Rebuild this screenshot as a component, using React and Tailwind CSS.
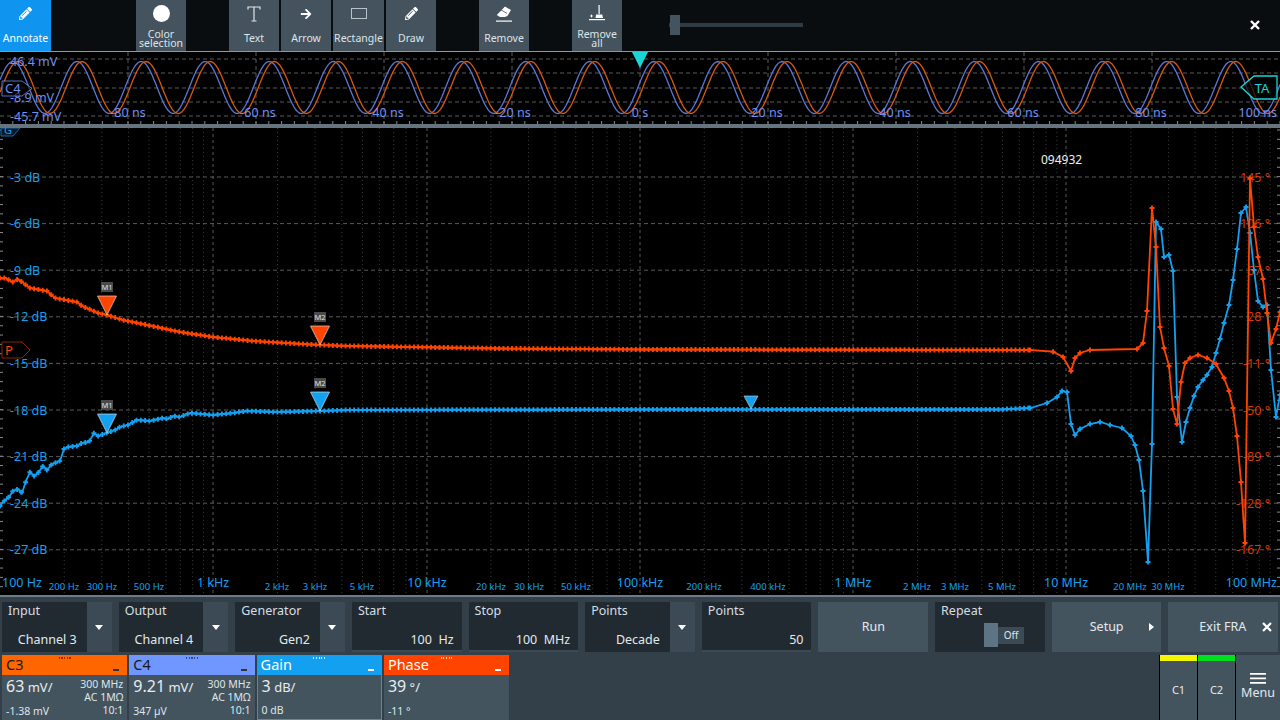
import React from 'react';
import { FaPencilAlt, FaEraser, FaArrowRight } from 'react-icons/fa';

const orangePts = [[0,278],[5,278],[13,282],[18,279],[30,288],[47,291],[55,298],[77,302],[82,306],[98,313],[107,315],[123,320],[147,325],[180,332],[213,337],[253,341],[320,345],[350,346],[500,348.5],[640,349.5],[1030,350],[1053,351.7],[1063,357],[1071,371],[1075,358],[1080,353],[1090,350],[1137,349],[1143,343],[1147,311],[1152,208],[1156,247],[1160,327],[1164,348],[1169,366],[1173,409],[1177,424],[1181,382],[1185,363],[1190,358],[1198,355],[1207,358],[1216,364],[1224,378],[1229,391],[1233,408],[1237,436],[1241,482],[1245,543],[1250,178],[1254,227],[1258,257],[1263,279],[1267,313],[1271,343],[1276,329],[1280,312]];
const bluePts = [[0,506],[5,500],[9,497],[13,491],[18,489],[22,493],[26,481],[30,472],[34,476],[38,473],[43,466],[47,470],[52,464],[60,461],[64,449],[68,447],[77,446],[82,443],[89,442],[94,433],[98,436],[107,433],[115,430],[120,427],[128,425],[137,420],[150,421],[163,418],[168,419],[173,416],[180,417],[190,413],[213,415],[233,413],[247,411],[277,412],[320,411],[350,410],[640,409.5],[1000,409.5],[1030,408],[1047,403],[1057,397],[1062,391],[1067,392],[1071,424],[1075,435],[1080,429],[1090,424],[1100,422],[1110,425],[1122,428],[1131,436],[1135,445],[1139,460],[1143,491],[1148,562],[1152,444],[1156,222],[1161,229],[1164,257],[1169,255],[1173,271],[1177,397],[1182,442],[1186,422],[1190,408],[1194,396],[1198,387],[1203,380],[1207,375],[1212,367],[1216,353],[1220,339],[1224,323],[1229,305],[1233,280],[1237,249],[1241,213],[1246,207],[1250,233],[1254,270],[1258,301],[1263,307],[1267,305],[1271,370],[1276,417],[1280,395]];

// one dot per sweep point, 50 points a decade
function sweepDots(pts) {
  const dots = [];
  for (let x = 0; x < 1030; x += 4.267) {
    let i = 0;
    while (pts[i + 1][0] < x) i++;
    const [x0, y0] = pts[i];
    const [x1, y1] = pts[i + 1];
    dots.push([x, y0 + ((y1 - y0) * (x - x0)) / (x1 - x0)]);
  }
  return dots.concat(pts.filter((p) => p[0] >= 1030));
}

function Trace({ pts, color }) {
  const line = pts.map((p) => p.join(',')).join(' ');
  const dots = sweepDots(pts)
    .map(([x, y]) => `M${(x - 2.5).toFixed(1)} ${y.toFixed(1)}h5M${x.toFixed(1)} ${(y - 2.5).toFixed(1)}v5`)
    .join('');
  return (
    <g>
      <polyline points={line} fill="none" stroke={color} strokeWidth="1.8" />
      <path d={dots} fill="none" stroke={color} strokeWidth="1.9" />
    </g>
  );
}

function Marker({ x, tip, color, label }) {
  return (
    <g>
      <polygon points={`${x - 9.5},${tip - 19} ${x + 9.5},${tip - 19} ${x},${tip}`} fill={color} stroke="#d8d8d8" strokeWidth="0.7" />
      {label && <rect x={x - 6} y={tip - 33} width="12" height="10" fill="#4a4a4a" />}
      {label && <text x={x} y={tip - 25} fontSize="7.5" fill="#e0e0e0" textAnchor="middle">{label}</text>}
    </g>
  );
}

const dbLabels = ['-3 dB', '-6 dB', '-9 dB', '-12 dB', '-15 dB', '-18 dB', '-21 dB', '-24 dB', '-27 dB'];
const degLabels = ['145 °', '106 °', '67 °', '28 °', '-11 °', '-50 °', '-89 °', '-128 °', '-167 °'];
const bigFreq = [['1 kHz', 213], ['10 kHz', 427], ['100 kHz', 640], ['1 MHz', 853], ['10 MHz', 1066]];
const smallFreq = [['200 Hz', 64], ['300 Hz', 102], ['500 Hz', 149], ['2 kHz', 277], ['3 kHz', 315], ['5 kHz', 362], ['20 kHz', 491], ['30 kHz', 529], ['50 kHz', 576], ['200 kHz', 704], ['400 kHz', 768], ['2 MHz', 917], ['3 MHz', 955], ['5 MHz', 1002], ['20 MHz', 1130], ['30 MHz', 1168]];

function MainPlot() {
  const minors = [];
  for (let d = 0; d < 6; d++) {
    for (let n = 2; n < 10; n++) minors.push(d * 213.33 + Math.log10(n) * 213.33);
  }
  const rows = dbLabels.map((_, i) => 177 + i * 46.6);
  const ticks = [];
  for (let y = 130; y < 595; y += 9.32) ticks.push(y);
  return (
    <svg className="block w-[1280px] h-[467px] bg-black" viewBox="0 128 1280 467">
      {minors.map((x) => <line key={x} x1={x} x2={x} y1="128" y2="595" stroke="#3a3a3a" strokeWidth="1" strokeDasharray="1 3" />)}
      {[213, 427, 640, 853, 1066].map((x) => <line key={x} x1={x} x2={x} y1="128" y2="595" stroke="#5a5a5a" strokeWidth="1" strokeDasharray="3 3" />)}
      {rows.map((y) => <line key={y} x1="0" x2="1280" y1={y} y2={y} stroke="#5a5a5a" strokeWidth="1" strokeDasharray="4 3" />)}
      {ticks.map((y) => <line key={y} x1="0" x2="3" y1={y} y2={y} stroke="#8a8a8a" strokeWidth="1" />)}
      {ticks.map((y) => <line key={y} x1="1277" x2="1280" y1={y} y2={y} stroke="#8a8a8a" strokeWidth="1" />)}
      <polygon points="1,128 20,128 13,136 1,136" fill="#0b1a26" stroke="#146aa8" strokeWidth="1" />
      <text x="4" y="134" fontSize="11" fill="#14a0f0">G</text>
      <g fontSize="12.5" fill="#14a0f0">
        {dbLabels.map((t, i) => <text key={t} x="10" y={rows[i] + 4.5}>{t}</text>)}
        <text x="2" y="587">100 Hz</text>
        <text x="1277" y="587" textAnchor="end">100 MHz</text>
        {bigFreq.map(([t, x]) => <text key={t} x={x} y="587" textAnchor="middle">{t}</text>)}
      </g>
      <g fontSize="9.5" fill="#14a0f0">
        {smallFreq.map(([t, x]) => <text key={t} x={x} y="590" textAnchor="middle">{t}</text>)}
      </g>
      <Trace pts={bluePts} color="#14a0f0" />
      <Trace pts={orangePts} color="#ff4400" />
      <g fontSize="12.5" fill="#ff4400" fillOpacity="0.85">
        {degLabels.map((t, i) => <text key={t} x="1270" y={rows[i] + 4.5} textAnchor="end">{t}</text>)}
      </g>
      <polygon points="2,342 22,342 30,350 22,358 2,358" fill="#000" stroke="#8a2400" strokeWidth="1" />
      <text x="5" y="355" fontSize="13" fill="#ff4400">P</text>
      <Marker x={107} tip={315} color="#ff4400" label="M1" />
      <Marker x={320} tip={345} color="#ff4400" label="M2" />
      <Marker x={107} tip={433} color="#14a0f0" label="M1" />
      <Marker x={320} tip={411} color="#14a0f0" label="M2" />
      <polygon points="744,396 758,396 751,409" fill="#14a0f0" stroke="#d8d8d8" strokeWidth="0.6" />
      <text x="1041" y="164" fontSize="12" fill="#f0f0f0">094932</text>
    </svg>
  );
}

function sine(offset) {
  const pts = [];
  for (let x = 0; x <= 1280; x += 2) {
    pts.push(`${x},${(87.5 - 26 * Math.cos((2 * Math.PI * (x - 77 - offset)) / 64.1)).toFixed(1)}`);
  }
  return pts.join(' ');
}

function Overview() {
  const ticks = [];
  for (let x = 0; x < 1280; x += 12.8) ticks.push(x);
  return (
    <svg className="block w-[1280px] h-[72px] bg-black" viewBox="0 52 1280 72">
      {[59, 73, 88, 102, 116].map((y) => <line key={y} x1="0" x2="1280" y1={y} y2={y} stroke="#5a5a5a" strokeWidth="1" strokeDasharray="4 3" />)}
      {[128, 256, 384, 512, 640, 768, 896, 1024, 1152].map((x) => <line key={x} x1={x} x2={x} y1="52" y2="124" stroke="#5a5a5a" strokeWidth="1" strokeDasharray="4 3" />)}
      {ticks.map((x) => <line key={x} x1={x} x2={x} y1="121" y2="124" stroke="#8a8a8a" strokeWidth="1" />)}
      <polyline points={sine(0)} fill="none" stroke="#5a78d8" strokeWidth="1.3" />
      <polyline points={sine(5)} fill="none" stroke="#d9590f" strokeWidth="1.3" />
      <g fontSize="12.5" fill="#7090f0">
        <text x="10" y="66">46.4 mV</text>
        <text x="10" y="102">-8.9 mV</text>
        <text x="10" y="121">-45.7 mV</text>
        {[['-80 ns', 128], ['-60 ns', 258], ['-40 ns', 386], ['-20 ns', 513], ['0 s', 640], ['20 ns', 767], ['40 ns', 895], ['60 ns', 1023], ['80 ns', 1151]].map(([t, x]) => (
          <text key={t} x={x} y="117" textAnchor="middle">{t}</text>
        ))}
        <text x="1277" y="117" textAnchor="end">100 ns</text>
      </g>
      <polygon points="632,52 648,52 640,68" fill="#1bd6d6" />
      <polygon points="2,81 22,81 32,88.5 22,96 2,96" fill="#000" fillOpacity="0.6" stroke="#7090f0" strokeWidth="0.8" />
      <text x="5" y="93" fontSize="13" fill="#7090f0">C4</text>
      <polygon points="1241,87 1254,76 1277,76 1277,99 1254,99" fill="#000" fillOpacity="0.7" stroke="#1bd6d6" strokeWidth="1.3" />
      <text x="1262" y="93" fontSize="13" fill="#1bd6d6" textAnchor="middle">TA</text>
    </svg>
  );
}

function ToolButton({ label, children, className = '' }) {
  return (
    <div className={`w-[50px] h-[51px] bg-[#44535e] flex flex-col items-center text-[10.5px] leading-[9.5px] text-[#dfe5e9] text-center ${className}`}>
      <div className="h-[27px] flex items-center justify-center shrink-0">{children}</div>
      <div className="h-[20px] mt-[2px] flex items-center justify-center">{label}</div>
    </div>
  );
}

function Toolbar() {
  return (
    <div className="h-[51px] flex items-start bg-[#0a0d0f] text-[#dfe5e9]">
      <div className="w-[51px] h-[51px] bg-[#0f95ef] flex flex-col items-center text-[10.5px] text-white">
        <div className="h-[27px] flex items-center"><FaPencilAlt size={13} /></div>
        <div className="h-[20px] mt-[2px] flex items-center">Annotate</div>
      </div>
      <ToolButton className="ml-[85px]" label={<span>Color<br />selection</span>}>
        <div className="w-[17px] h-[17px] rounded-full bg-white" />
      </ToolButton>
      <ToolButton className="ml-[43px]" label="Text">
        <svg width="14" height="16" viewBox="0 0 14 16" fill="none" stroke="#dfe5e9" strokeWidth="1.2">
          <path d="M1 3.5V1h12v2.5M7 1v14M4.5 15h5" />
        </svg>
      </ToolButton>
      <ToolButton className="ml-[2px]" label="Arrow"><FaArrowRight size={12} color="#fff" /></ToolButton>
      <ToolButton className="ml-[2px] w-[51px]" label="Rectangle">
        <div className="w-[16px] h-[11px] border border-[#b8c2c9]" />
      </ToolButton>
      <ToolButton className="ml-[2px]" label="Draw"><FaPencilAlt size={13} color="#fff" /></ToolButton>
      <ToolButton className="ml-[43px]" label="Remove">
        <svg width="18" height="18" viewBox="0 0 18 18" fill="#fff">
          <path d="M10 1.5l6 3.6-3.6 5.9-2.6 1H5L1.8 10z" />
          <path d="M1 15.5h16v1.2H1z" />
          <path d="M6 4.8l6 3.6" stroke="#44535e" strokeWidth="0.8" />
        </svg>
      </ToolButton>
      <ToolButton className="ml-[43px]" label={<span>Remove<br />all</span>}>
        <svg width="18" height="18" viewBox="0 0 18 18" fill="#fff">
          <path d="M10.5 0h1.2v9h-1.2z" />
          <path d="M8 9.5h6.2l.8 3.5H7.5z" />
          <path d="M1 14h16v1.2H1z" />
          <path d="M3.5 9l.6 1.4 1.4.6-1.4.6-.6 1.4-.6-1.4-1.4-.6 1.4-.6z" />
        </svg>
      </ToolButton>
      <div className="ml-[47px] mt-[15px] w-[134px] h-[20px] relative flex items-center">
        <div className="w-full h-[4px] bg-[#2f3b44]" />
        <div className="absolute left-[1px] top-0 w-[10px] h-[20px] bg-[#44535e]" />
      </div>
      <div className="ml-auto mr-[17px] mt-[17px] text-white">
        <svg width="16" height="16" viewBox="0 0 16 16" stroke="#fff" strokeWidth="2.4"><path d="M4 4l8 8M12 4l-8 8" /></svg>
      </div>
    </div>
  );
}

function Caret() {
  return (
    <div className="w-[25px] bg-[#3c4a55] flex items-center justify-center shrink-0">
      <div className="w-0 h-0 border-x-[4px] border-x-transparent border-t-[5px] border-t-white" />
    </div>
  );
}

function Field({ label, value, caret }) {
  return (
    <div className="flex h-[50px]">
      <div className={`flex-1 bg-[#212a31] px-[6px] flex flex-col justify-between ${caret ? '' : 'border-b-2 border-[#3c4a55]'}`}>
        <div className="text-[12.5px] leading-[18px] text-[#d8dee3]">{label}</div>
        <div className={`text-[12.5px] leading-[18px] text-[#e4e9ec] text-right whitespace-pre ${caret ? 'pr-[4px] pb-[3px]' : 'pr-[2px] pb-[1px]'}`}>{value}</div>
      </div>
      {caret && <Caret />}
    </div>
  );
}

function BarButton({ children }) {
  return <div className="h-[50px] bg-[#44545f] flex items-center text-[12.5px] text-[#e4e9ec]">{children}</div>;
}

function Handle({ light }) {
  return (
    <div className="absolute top-[1.5px] left-1/2 -translate-x-1/2 flex gap-[1.5px]">
      {[0, 1, 2, 3, 4].map((i) => <div key={i} className={`w-[1.2px] h-[2px] ${light ? 'bg-white/80' : 'bg-black/50'}`} />)}
    </div>
  );
}

function ChannelCard({ name, head, title, dash, scale, unit, bw, coupling, offset, ratio, boxed }) {
  return (
    <div className={`w-[125.3px] h-[65px] flex flex-col ${boxed ? 'bg-[#14a0f0]' : 'bg-[#44545f]'}`}>
      <div className={`relative h-[20px] shrink-0 px-[4px] flex items-center text-[14.5px] ${head} ${title}`}>
        <Handle light={title === 'text-white'} />
        <span>{name}</span>
        <div className={`absolute right-[8px] top-[14px] w-[6px] h-[1.5px] ${dash}`} />
      </div>
      <div className={`flex-1 flex justify-between bg-[#44545f] pl-[4px] pr-[4px] ${boxed ? 'mx-[1px] mb-[1px]' : ''}`}>
        <div className="flex flex-col justify-between">
          <div className="text-[#e8ecef] leading-[22px] whitespace-nowrap"><span className="text-[16px]">{scale}</span><span className="text-[13px]"> {unit}</span></div>
          <div className="text-[10.5px] leading-[16px] pb-[1px] text-[#dfe5e9]">{offset}</div>
        </div>
        {bw && (
          <div className="flex flex-col text-right text-[10.5px] leading-[13px] pt-[3px] text-[#dfe5e9]">
            <div>{bw}</div>
            <div>{coupling}</div>
            <div className="mt-auto pb-[3px]">{ratio}</div>
          </div>
        )}
      </div>
    </div>
  );
}

function SideTab({ label, color }) {
  return (
    <div className="w-[37px] h-[65px] bg-[#44545f] flex flex-col">
      <div className={`h-[6px] ${color}`} />
      <div className="flex-1 flex items-center justify-center text-[11px] text-[#e4e9ec]">{label}</div>
    </div>
  );
}

function BottomPanel() {
  return (
    <div className="h-[125px] bg-[#333f49] border-t-2 border-[#6d7c88] flex flex-col">
      <div className="grid grid-cols-11 gap-[7px] px-[2px] pt-[5px]">
        <Field label="Input" value="Channel 3" caret />
        <Field label="Output" value="Channel 4" caret />
        <Field label="Generator" value="Gen2" caret />
        <Field label="Start" value="100  Hz" />
        <Field label="Stop" value="100  MHz" />
        <Field label="Points" value="Decade" caret />
        <Field label="Points" value="50" />
        <BarButton><span className="w-full text-center">Run</span></BarButton>
        <div className="h-[50px] bg-[#212a31] px-[6px] relative">
          <div className="text-[12.5px] leading-[18px] text-[#d8dee3]">Repeat</div>
          <div className="absolute left-[49px] top-[21px] w-[14px] h-[24px] bg-[#5d7485]" />
          <div className="absolute left-[63px] top-[25px] w-[26px] h-[17px] bg-[#3c4a55] text-[10px] leading-[17px] text-center text-[#dfe5e9]">Off</div>
        </div>
        <BarButton>
          <span className="ml-[38px]">Setup</span>
          <div className="ml-[25px] w-0 h-0 border-y-[4px] border-y-transparent border-l-[5px] border-l-white" />
        </BarButton>
        <BarButton>
          <span className="ml-[31px]">Exit FRA</span>
          <svg className="ml-[15px]" width="12" height="12" viewBox="0 0 12 12" stroke="#fff" strokeWidth="2.2"><path d="M2 2l8 8M10 2l-8 8" /></svg>
        </BarButton>
      </div>
      <div className="flex gap-[2px] pl-[2px] mt-[3px]">
        <ChannelCard name="C3" head="bg-[#ff6600]" title="text-[#1a1a1a]" dash="bg-[#333]" scale="63" unit="mV/" bw="300 MHz" coupling="AC 1MΩ" offset="-1.38 mV" ratio="10:1" />
        <ChannelCard name="C4" head="bg-[#7096ff]" title="text-[#1a1a1a]" dash="bg-[#333]" scale="9.21" unit="mV/" bw="300 MHz" coupling="AC 1MΩ" offset="347 µV" ratio="10:1" />
        <ChannelCard name="Gain" head="bg-[#14a0f0]" title="text-white" dash="bg-white" scale="3" unit="dB/" offset="0 dB" boxed />
        <ChannelCard name="Phase" head="bg-[#ff4400]" title="text-white" dash="bg-white" scale="39" unit="°/" offset="-11 °" />
        <div className="ml-auto flex bg-black gap-[1px] pl-[1px]">
          <SideTab label="C1" color="bg-[#f5f500]" />
          <SideTab label="C2" color="bg-[#00e020]" />
          <div className="w-[44px] h-[65px] bg-[#44545f] flex flex-col items-center pt-[18px] text-[12.5px] text-[#e4e9ec]">
            <svg width="16" height="11" viewBox="0 0 16 11" fill="#fff"><path d="M0 0h16v1.8H0zM0 4.5h16v1.8H0zM0 9h16v1.8H0z" /></svg>
            <span className="leading-[18px]">Menu</span>
          </div>
        </div>
      </div>
    </div>
  );
}

export default function App() {
  return (
    <div className="w-[1280px] h-[720px] overflow-hidden bg-black font-['Noto_Sans',sans-serif]">
      <Toolbar />
      <div className="h-px bg-[#8a98a3]" />
      <Overview />
      <div className="h-[4px] bg-[#66747f]" />
      <MainPlot />
      <BottomPanel />
    </div>
  );
}
